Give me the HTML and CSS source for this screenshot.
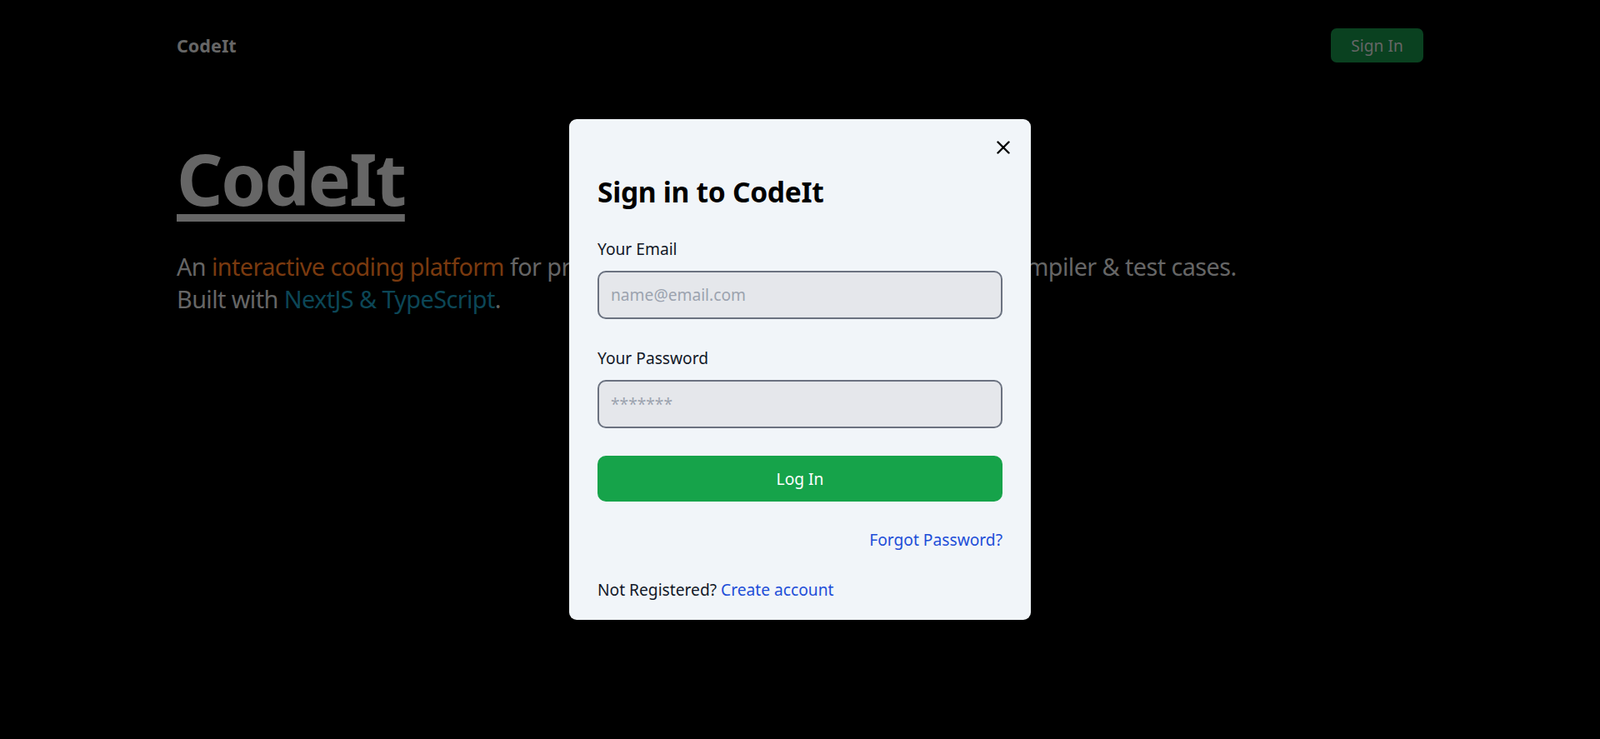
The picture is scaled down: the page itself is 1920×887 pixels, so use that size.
FILE: index.html
```html
<!DOCTYPE html>
<html lang="en">
<head>
<meta charset="utf-8">
<title>CodeIt</title>
<link rel="stylesheet" href="styles.css">
</head>
<body>
<div class="page">
  <header class="nav">
    <a class="brand" href="#">CodeIt</a>
    <button class="nav-signin" type="button">Sign In</button>
  </header>
  <section class="hero">
    <h1 class="hero-title">CodeIt</h1>
    <p class="hero-text">An <span class="accent-orange">interactive coding platform</span> for practicing all DSA problems with a built-in compiler &amp; test cases.<br>Built with <span class="accent-teal">NextJS &amp; TypeScript</span>.</p>
  </section>
</div>

<div class="overlay">
  <div class="modal" role="dialog" aria-labelledby="modal-title">
    <div class="modal-top">
      <button class="close-btn" type="button" aria-label="Close">
        <svg width="16" height="16" viewBox="0 0 16 16" aria-hidden="true">
          <path d="M1.5 1.5 L14.5 14.5 M14.5 1.5 L1.5 14.5" stroke="#000" stroke-width="2.4" stroke-linecap="round" fill="none"/>
        </svg>
      </button>
    </div>
    <h2 class="modal-title" id="modal-title">Sign in to CodeIt</h2>
    <form class="form">
      <label class="field-label label-email" for="email">Your Email</label>
      <input class="field-input" id="email" type="email" placeholder="name@email.com">
      <label class="field-label label-pass" for="password">Your Password</label>
      <input class="field-input" id="password" type="password" placeholder="*******">
      <button class="login-btn" type="button">Log In</button>
      <div class="forgot-row"><a class="link" href="#">Forgot Password?</a></div>
      <div class="register-row">Not Registered? <a class="link" href="#">Create account</a></div>
    </form>
  </div>
</div>
</body>
</html>
```

FILE: styles.css
```css
* {
  box-sizing: border-box;
}

html, body {
  margin: 0;
  padding: 0;
  background: #000;
}

body {
  font-family: "Noto Sans", "Open Sans", sans-serif;
  font-size: 19.2px;
  line-height: 28.8px;
  color: #666;
  min-height: 887px;
}

.page {
  width: 1496px;
  margin: 0 auto;
}

.nav {
  display: flex;
  align-items: center;
  justify-content: space-between;
  padding-top: 34px;
}

.brand {
  color: #666;
  font-weight: 700;
  font-size: 21.6px;
  text-decoration: none;
  line-height: 41px;
}

.nav-signin {
  height: 41px;
  width: 111px;
  border: none;
  border-radius: 7px;
  background: #0a4120;
  color: #666;
  font-family: inherit;
  font-size: 19.2px;
  padding: 0;
}

.hero {
  margin-top: 96px;
}

.hero-title {
  margin: 0;
  font-size: 86.4px;
  line-height: 86.4px;
  font-weight: 700;
  letter-spacing: -0.025em;
  color: #666;
  text-decoration: underline;
  text-decoration-thickness: 9px;
  text-underline-offset: 10px;
  display: inline-block;
}

.hero-text {
  margin: 44px 0 0;
  font-size: 28.8px;
  line-height: 38.4px;
  letter-spacing: -0.02em;
  color: #666;
  white-space: nowrap;
}

.accent-orange {
  color: #7a3a0f;
}

.accent-teal {
  color: #0c4656;
}

.overlay {
  position: fixed;
  inset: 0;
  display: flex;
  align-items: center;
  justify-content: center;
}

.modal {
  width: 554px;
  height: 601px;
  background: #f1f5f9;
  border-radius: 9px;
  padding: 20px 34px 20px;
  color: #111827;
}

.modal-top {
  display: flex;
  justify-content: flex-end;
  height: 28px;
}

.close-btn {
  width: 28px;
  height: 28px;
  margin-right: -15px;
  border: none;
  background: transparent;
  padding: 0;
  display: flex;
  align-items: center;
  justify-content: center;
}

.modal-title {
  margin: 19px 0 0;
  font-size: 33.6px;
  line-height: 40px;
  font-weight: 700;
  letter-spacing: -0.3px;
  color: #000;
}

.form {
  display: flex;
  flex-direction: column;
}

.field-label {
  display: block;
  font-size: 19.2px;
  line-height: 28.8px;
  color: #111827;
}

.label-email {
  margin-top: 35px;
}

.label-pass {
  margin-top: 33px;
}

.field-input {
  margin-top: 11px;
  height: 58px;
  width: 100%;
  background: #e5e7eb;
  border: 2px solid #6b7280;
  border-radius: 10px;
  padding: 0 14px;
  font-family: inherit;
  font-size: 19.2px;
  color: #111827;
  outline: none;
}

.field-input::placeholder {
  color: #9ca3af;
}

.login-btn {
  margin-top: 33px;
  height: 55px;
  width: 100%;
  border: none;
  border-radius: 10px;
  background: #16a34a;
  color: #fff;
  font-family: inherit;
  font-size: 19.2px;
}

.forgot-row {
  margin-top: 32px;
  text-align: right;
  line-height: 28.8px;
}

.register-row {
  margin-top: 32px;
  line-height: 28.8px;
  color: #111827;
}

.link {
  color: #1d4ed8;
  text-decoration: none;
}
```
